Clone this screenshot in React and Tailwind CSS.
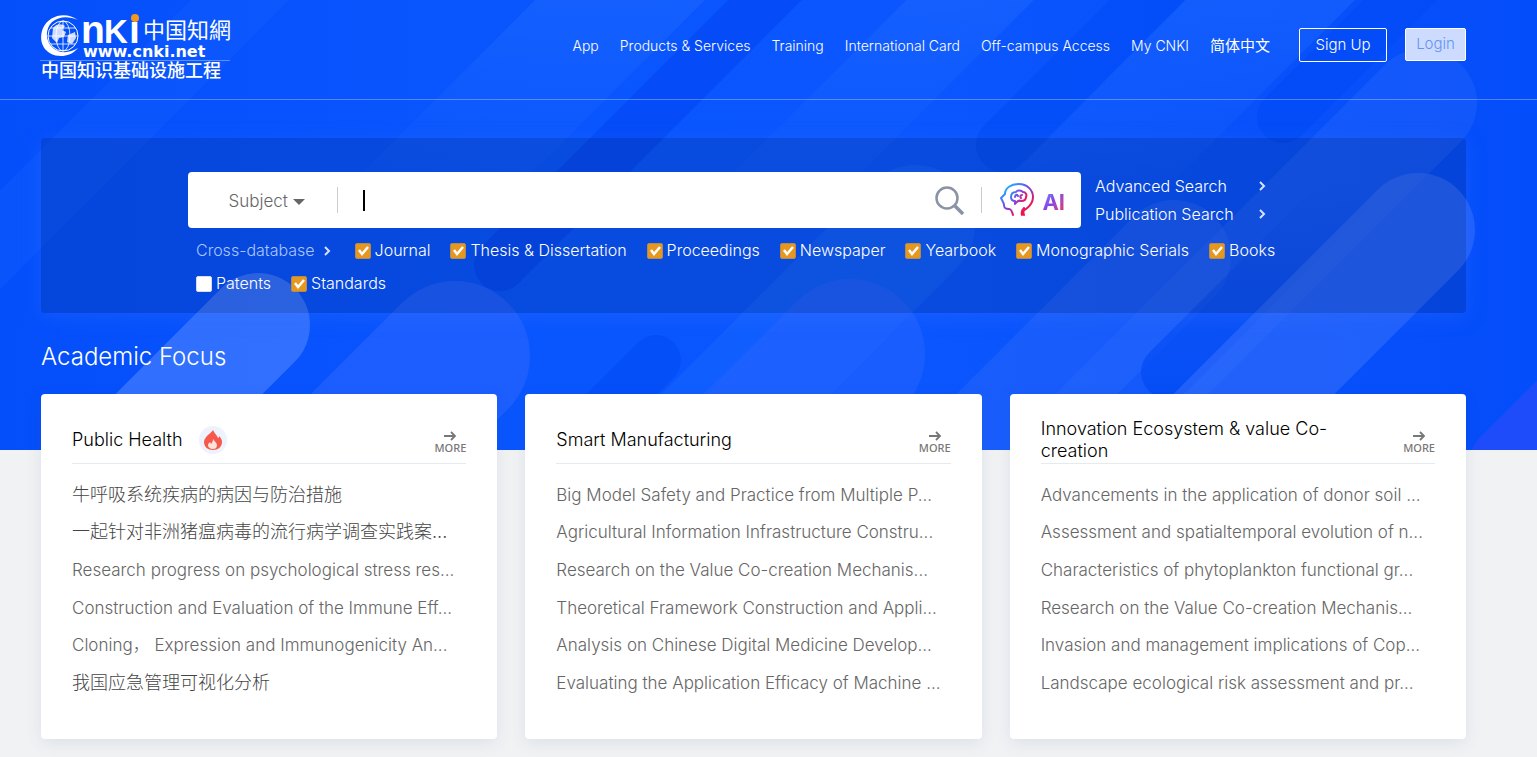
import { useState } from "react";

const NAV_LINKS = [
  { label: "App" },
  { label: "Products & Services" },
  { label: "Training" },
  { label: "International Card" },
  { label: "Off-campus Access" },
  { label: "My CNKI" },
  { label: "简体中文", zh: true },
];

const DATABASES = [
  { name: "Journal", checked: true },
  { name: "Thesis & Dissertation", checked: true },
  { name: "Proceedings", checked: true },
  { name: "Newspaper", checked: true },
  { name: "Yearbook", checked: true },
  { name: "Monographic Serials", checked: true },
  { name: "Books", checked: true },
  { name: "Patents", checked: false },
  { name: "Standards", checked: true },
];

const TOPICS = [
  {
    title: "Public Health",
    hot: true,
    articles: [
      { text: "牛呼吸系统疾病的病因与防治措施", zh: true },
      { text: "一起针对非洲猪瘟病毒的流行病学调查实践案...", zh: true },
      { text: "Research progress on psychological stress res..." },
      { text: "Construction and Evaluation of the Immune Eff..." },
      { text: "Cloning， Expression and Immunogenicity An..." },
      { text: "我国应急管理可视化分析", zh: true },
    ],
  },
  {
    title: "Smart Manufacturing",
    articles: [
      { text: "Big Model Safety and Practice from Multiple P..." },
      { text: "Agricultural Information Infrastructure Constru..." },
      { text: "Research on the Value Co-creation Mechanis..." },
      { text: "Theoretical Framework Construction and Appli..." },
      { text: "Analysis on Chinese Digital Medicine Develop..." },
      { text: "Evaluating the Application Efficacy of Machine ..." },
    ],
  },
  {
    title: "Innovation Ecosystem & value Co-creation",
    articles: [
      { text: "Advancements in the application of donor soil ..." },
      { text: "Assessment and spatialtemporal evolution of n..." },
      { text: "Characteristics of phytoplankton functional gr..." },
      { text: "Research on the Value Co-creation Mechanis..." },
      { text: "Invasion and management implications of Cop..." },
      { text: "Landscape ecological risk assessment and pr..." },
    ],
  },
];

function HeroBackground() {
  return (
    <svg
      className="absolute inset-0 w-full h-full"
      viewBox="0 0 1537 450"
      preserveAspectRatio="xMidYMid slice"
      fill="none"
      strokeLinecap="round"
      aria-hidden="true"
    >
      <defs>
        <linearGradient id="base" x1="0" y1="0" x2="1" y2="0">
          <stop offset="0" stopColor="#054ffb" />
          <stop offset="0.35" stopColor="#0a56fe" />
          <stop offset="0.6" stopColor="#0b56fe" />
          <stop offset="0.85" stopColor="#0850fa" />
          <stop offset="1" stopColor="#044dfa" />
        </linearGradient>
        {/* bands that dissolve towards the bottom */}
        <linearGradient id="fadeDown" x1="0" y1="0" x2="0" y2="210" gradientUnits="userSpaceOnUse">
          <stop offset="0" stopColor="#206aff" stopOpacity="0.45" />
          <stop offset="1" stopColor="#206aff" stopOpacity="0" />
        </linearGradient>
        {/* dark groove that dissolves towards the top */}
        <linearGradient id="fadeUp" x1="0" y1="390" x2="0" y2="180" gradientUnits="userSpaceOnUse">
          <stop offset="0" stopColor="#044cf5" stopOpacity="0.9" />
          <stop offset="1" stopColor="#044cf5" stopOpacity="0" />
        </linearGradient>
      </defs>
      <rect width="1537" height="450" fill="url(#base)" />
      <path d="M280 -40L-80 320" stroke="#1a62ff" strokeWidth="70" strokeOpacity="0.25" />
      <path d="M660 -40L260 360" stroke="url(#fadeDown)" strokeWidth="120" />
      <path d="M805 -40L500 265" stroke="#044af6" strokeWidth="52" strokeOpacity="0.8" />
      <path d="M915 225L600 540" stroke="#1766ff" strokeWidth="120" strokeOpacity="0.5" />
      <path d="M1010 -40L700 270" stroke="url(#fadeDown)" strokeWidth="90" />
      <path d="M1188 -40L1003 145" stroke="#044df8" strokeWidth="54" strokeOpacity="0.8" />
      <path d="M1310 -40L1000 270" stroke="url(#fadeDown)" strokeWidth="120" />
      <path d="M1440 -40L1283 117" stroke="#034bf6" strokeWidth="52" strokeOpacity="0.8" />
      <path d="M1423 103L1100 426" stroke="#2463fa" strokeWidth="108" strokeOpacity="0.45" />
      <path d="M1174 257L900 531" stroke="#2a68fb" strokeWidth="114" strokeOpacity="0.45" />
      <path d="M1400 140L1168 372" stroke="url(#fadeUp)" strokeWidth="54" />
      <path d="M1418 230L1100 548" stroke="#336efc" strokeWidth="114" strokeOpacity="0.6" />
      <path d="M850 354L700 504" stroke="#2563ff" strokeWidth="150" strokeOpacity="0.6" />
      <path d="M656 360L560 456" stroke="#044df8" strokeWidth="50" strokeOpacity="0.8" />
      <path d="M455 356L300 511" stroke="#2562ff" strokeWidth="150" strokeOpacity="0.7" />
      <path d="M258 325L100 483" stroke="#4079ff" strokeWidth="104" strokeOpacity="0.75" />
      <path d="M1600 360L1500 460" stroke="#2a4cfa" strokeWidth="60" strokeOpacity="0.7" />
    </svg>
  );
}

function Logo() {
  return (
    <svg className="w-[190px] h-16 overflow-visible" viewBox="0 0 190 64" role="img" aria-label="CNKI">
      <g fill="none" stroke="#fff">
        <circle cx="23" cy="22" r="15" strokeWidth="1" />
        <ellipse cx="23" cy="22" rx="7" ry="15" strokeWidth="0.8" />
        <path d="M8 22h30M10.500 14h25M10.500 30h25M23 7v30" strokeWidth="0.8" />
      </g>
      <path
        d="M13 14c4-5 9-4 12-2l-3 4 4 2-2 5-5 1-2 5-5-5zM28 21l7-3 1 6-4 6-5-2z"
        fill="#fff"
        fillOpacity="0.8"
      />
      <path
        d="M38 6C26-3 9 1 3 14c-6 15 3 28 18 28 6 0 12-2 17-8-8 5-18 6-25 0C5 27 5 15 12 8c7-6 17-6 26-2z"
        fill="#fff"
      />
      <g fill="#fff" fontFamily="Liberation Sans, sans-serif" fontWeight="700">
        <text x="41" y="29" fontSize="39">n</text>
        <text x="64" y="29" fontSize="33">K</text>
        <text x="89" y="29" fontSize="39">ı</text>
      </g>
      <circle cx="95" cy="4" r="4" fill="#f39a1c" />
      <text
        x="43"
        y="43"
        fill="#fff"
        fontSize="16"
        fontWeight="700"
        fontFamily="DejaVu Sans, sans-serif"
      >
        www.cnki.net
      </text>
      <text
        x="103"
        y="24"
        fill="#fff"
        fontSize="22"
        fontWeight="400"
        fontFamily="Noto Sans CJK SC, sans-serif"
      >
        中国知網
      </text>
      <path d="M0 46.500h190" stroke="#fff" strokeOpacity="0.35" />
      <text
        x="1"
        y="63"
        fill="#fff"
        fontSize="18"
        fontWeight="500"
        fontFamily="Noto Sans CJK SC, sans-serif"
      >
        中国知识基础设施工程
      </text>
    </svg>
  );
}

function AiIcon() {
  return (
    <svg className="w-[34px] h-[34px]" viewBox="0 0 34 34" fill="none" aria-hidden="true">
      <defs>
        <linearGradient id="ai" x1="7" y1="4" x2="26" y2="26" gradientUnits="userSpaceOnUse">
          <stop offset="0" stopColor="#1eaeff" />
          <stop offset="0.5" stopColor="#7a3fe8" />
          <stop offset="1" stopColor="#f0134f" />
        </linearGradient>
        <linearGradient id="brain" x1="12" y1="8" x2="26" y2="16" gradientUnits="userSpaceOnUse">
          <stop offset="0" stopColor="#2f8ef5" />
          <stop offset="0.5" stopColor="#8a3fe0" />
          <stop offset="1" stopColor="#f0134f" />
        </linearGradient>
      </defs>
      <g strokeWidth="2" strokeLinecap="round" strokeLinejoin="round">
        <path
          d="M13 32c-1-4-2-6-4-6-4 0-5-1-5-4 0-2-1-2-1-3l-2-4 4-4c0-6 6-10 14-10 8 0 14 6 14 13 0 6-3 9-7 12-3 1-3 3-2 6M22 32c-1-3 0-5 2-7"
          stroke="url(#ai)"
        />
        <g stroke="url(#brain)">
          <path d="M15 18c-3 0-4-2-4-4 0-3 2-5 5-5 2-3 6-1 7 0 3 0 4 3 3 5 0 3-2 4-5 4-2-1-4 0-6 3z" />
          <path d="M15 14c0-2 2-3 3-1M22 12c-2 0-2 2-1 3" />
        </g>
      </g>
    </svg>
  );
}

function Chevron() {
  return (
    <svg className="w-2 h-3" viewBox="0 0 8 12" fill="none" aria-hidden="true">
      <path d="M2 2l4 4-4 4" stroke="#d5e1ff" strokeWidth="2" />
    </svg>
  );
}

function FlameBadge() {
  return (
    <svg className="w-7 h-7 shrink-0" viewBox="0 0 28 28" aria-label="Hot">
      <circle cx="14" cy="14" r="14" fill="#eef2fc" />
      <path
        d="M14 4c1 3 4 5 5 8 1 0 1-1 1-2 2 2 3 4 3 6 0 5-4 8-9 8s-9-3-9-8c0-3 2-5 4-7s4-3 5-5z"
        fill="#f6594b"
      />
      <path d="M14 13c1 2 4 4 4 6 0 3-2 4-4 4s-5-1-5-4c0-1 1-2 2-3l1 2c1-1 2-3 2-5z" fill="#fde3d9" />
    </svg>
  );
}

function DatabaseCheckbox({ name, checked, onChange }) {
  return (
    <label className="flex items-center gap-1">
      <span className="grid w-4 h-4">
        <input
          type="checkbox"
          checked={checked}
          onChange={onChange}
          className="peer col-start-1 row-start-1 appearance-none rounded-xs bg-white border border-[#d8dcec] checked:bg-[#e6971f] checked:border-[#b08a50]"
        />
        <svg
          className="col-start-1 row-start-1 hidden peer-checked:block pointer-events-none"
          viewBox="0 0 16 16"
          fill="none"
          aria-hidden="true"
        >
          <path d="M4 7l3 4 6-7" stroke="#fff" strokeWidth="2.500" />
        </svg>
      </span>
      {name}
    </label>
  );
}

function TopicCard({ topic }) {
  return (
    <section className="h-[345px] min-w-0 rounded bg-white px-[31px] pt-5 shadow-[0_4px_16px_rgba(40,80,140,0.1)]">
      <div className="flex h-[50px] items-center justify-between border-b border-[#e3ebf0] pt-0.5">
        <div className="flex items-center gap-4">
          <h3 className="max-w-[310px] text-[18px] leading-[22px] text-black">{topic.title}</h3>
          {topic.hot && <FlameBadge />}
        </div>
        <a
          href="#more"
          className="flex shrink-0 flex-col items-center pt-1 font-['Noto_Sans'] text-[11px] leading-3 font-medium text-[#777]"
        >
          <svg className="w-4 h-3" viewBox="0 0 16 12" fill="none" aria-hidden="true">
            <path d="M2 6h11M9 2l4 4-4 4" stroke="#777" strokeWidth="1.800" />
          </svg>
          MORE
        </a>
      </div>
      <ul className="mt-3 grid h-[226px] grid-rows-6 items-center whitespace-nowrap text-[17px] leading-8 text-[#666]">
        {topic.articles.map((article) => (
          <li key={article.text}>
            <a href="#article" className={article.zh ? "text-[18px] text-[#444]" : ""}>
              {article.text}
            </a>
          </li>
        ))}
      </ul>
    </section>
  );
}

export default function App() {
  const [databases, setDatabases] = useState(DATABASES);
  const [query, setQuery] = useState("");

  const toggleDatabase = (name) => {
    setDatabases((prev) =>
      prev.map((db) => (db.name === name ? { ...db, checked: !db.checked } : db))
    );
  };

  return (
    <div className="relative min-h-screen bg-[#f1f2f4] pb-[18px] font-['Inter','Noto_Sans_CJK_SC',sans-serif] font-light">
      <div className="absolute inset-x-0 top-0 h-[450px] overflow-hidden">
        <HeroBackground />
      </div>

      <div className="relative">
        <header className="flex h-[100px] items-start justify-between border-b border-white/30 pl-10 pr-[71px] text-white">
          <a href="#home" className="pt-[14px]">
            <Logo />
          </a>
          <div className="flex items-start pt-7">
            <nav className="flex gap-[21px] text-[14px] leading-9">
              {NAV_LINKS.map((link) => (
                <a key={link.label} href="#nav" className={link.zh ? "text-[15px] font-normal" : ""}>
                  {link.label}
                </a>
              ))}
            </nav>
            <button className="ml-[29px] h-[34px] w-[88px] rounded-xs border border-white text-[15px]">
              Sign Up
            </button>
            <button className="ml-[18px] h-[33px] w-[61px] rounded-xs border border-white bg-[#cddbfe] text-[15px] text-[#6394f2]">
              Login
            </button>
          </div>
        </header>

        <main className="pl-[41px] pr-[71px] pt-[38px]">
          <div className="min-h-[175px] rounded bg-black/12 pl-[147px] pt-[34px] text-white shadow-[0_4px_20px_rgba(60,120,255,0.25)]">
            <div className="flex items-center gap-[14px]">
              <form
                className="flex h-14 w-[893px] items-center rounded bg-white"
                onSubmit={(e) => e.preventDefault()}
              >
                <div className="flex w-[149px] items-center justify-center gap-1 pl-2 pt-1 text-[#666]">
                  <select
                    aria-label="Search field"
                    className="appearance-none bg-transparent text-[17px]"
                  >
                    <option>Subject</option>
                  </select>
                  <svg className="w-3 h-2" viewBox="0 0 12 8" aria-hidden="true">
                    <path d="M0 1h12L6 7z" fill="#666" />
                  </svg>
                </div>
                <span className="h-[26px] w-px bg-[#ccc]" />
                <span className="ml-[25px] h-[21px] w-0.5 bg-black" />
                <input
                  type="text"
                  aria-label="Search"
                  value={query}
                  onChange={(e) => setQuery(e.target.value)}
                  className="h-full min-w-0 flex-1 px-1 text-[17px] text-black outline-none"
                />
                <button type="submit" aria-label="Search" className="mr-4">
                  <svg className="w-[30px] h-[30px]" viewBox="0 0 30 30" fill="none" aria-hidden="true">
                    <circle cx="12" cy="13" r="10.500" stroke="#8a92a6" strokeWidth="2.500" />
                    <path d="M20 21l8 8" stroke="#8a92a6" strokeWidth="3.500" />
                  </svg>
                </button>
                <span className="h-[26px] w-px bg-[#ccc]" />
                <button type="button" className="ml-[18px] mr-4 flex items-center gap-2">
                  <AiIcon />
                  <span className="bg-gradient-to-br from-[#21a8ff] via-[#8a3fe6] to-[#f0134f] bg-clip-text pt-1 text-[22px] leading-6 font-bold text-transparent">
                    AI
                  </span>
                </button>
              </form>
              <div className="flex w-[171px] flex-col text-[16px] leading-7">
                <a href="#advanced" className="flex items-center justify-between">
                  Advanced Search
                  <Chevron />
                </a>
                <a href="#publication" className="flex items-center justify-between">
                  Publication Search
                  <Chevron />
                </a>
              </div>
            </div>
            <div className="flex max-w-[1120px] flex-wrap items-center gap-x-5 pl-2 pt-1.5 text-[16px] leading-[33px]">
              <a href="#cross" className="flex items-center gap-2 pr-1 text-[#a9c6ff]">
                Cross-database
                <Chevron />
              </a>
              {databases.map((db) => (
                <DatabaseCheckbox
                  key={db.name}
                  name={db.name}
                  checked={db.checked}
                  onChange={() => toggleDatabase(db.name)}
                />
              ))}
            </div>
          </div>

          <h2 className="pt-[26px] text-[24px] leading-9 text-white">Academic Focus</h2>

          <div className="grid grid-cols-3 gap-7 pt-[19px]">
            {TOPICS.map((topic) => (
              <TopicCard key={topic.title} topic={topic} />
            ))}
          </div>
        </main>
      </div>
    </div>
  );
}
